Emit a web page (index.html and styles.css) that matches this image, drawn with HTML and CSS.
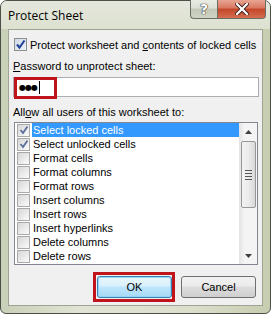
FILE: index.html
```html
<!DOCTYPE html>
<html>
<head>
<meta charset="utf-8">
<link rel="stylesheet" href="styles.css">
</head>
<body>
<div class="window">
  <div class="titlebar">
    <span class="title">Protect Sheet</span>
    <div class="caption-btns">
      <div class="cbtn help">?</div>
      <div class="cbtn close">
        <svg width="14" height="12" viewBox="0 0 14 12"><path d="M2 1 L12 11 M12 1 L2 11" stroke="#3a1a1a" stroke-width="4" stroke-linecap="square"/><path d="M2 1 L12 11 M12 1 L2 11" stroke="#fff" stroke-width="2.2" stroke-linecap="square"/></svg>
      </div>
    </div>
  </div>
  <div class="client">
    <div class="row top-row">
      <span class="chk big checked"><svg width="11" height="11" viewBox="0 0 11 11"><path d="M2 5.5 L4.5 8.5 L9.5 1.5" fill="none" stroke="#1c3f94" stroke-width="2"/></svg></span>
      <span>Protect worksheet and <u>c</u>ontents of locked cells</span>
    </div>
    <div class="lbl pw-lbl"><u>P</u>assword to unprotect sheet:</div>
    <div class="input">
      <span class="dots">●●●</span><span class="caret"></span>
      <div class="redbox pw-red"></div>
    </div>
    <div class="lbl allow-lbl">All<u>o</u>w all users of this worksheet to:</div>
    <div class="listbox">
      <div class="items">
        <div class="item sel"><span class="chk small checked"><svg width="10" height="10" viewBox="0 0 10 10"><path d="M1.5 5 L4 8 L8.5 1.5" fill="none" stroke="#5a6e9c" stroke-width="1.8"/></svg></span><span class="itxt">Select locked cells</span></div>
        <div class="item"><span class="chk small checked"><svg width="10" height="10" viewBox="0 0 10 10"><path d="M1.5 5 L4 8 L8.5 1.5" fill="none" stroke="#5a6e9c" stroke-width="1.8"/></svg></span><span class="itxt">Select unlocked cells</span></div>
        <div class="item"><span class="chk small"></span><span class="itxt">Format cells</span></div>
        <div class="item"><span class="chk small"></span><span class="itxt">Format columns</span></div>
        <div class="item"><span class="chk small"></span><span class="itxt">Format rows</span></div>
        <div class="item"><span class="chk small"></span><span class="itxt">Insert columns</span></div>
        <div class="item"><span class="chk small"></span><span class="itxt">Insert rows</span></div>
        <div class="item"><span class="chk small"></span><span class="itxt">Insert hyperlinks</span></div>
        <div class="item"><span class="chk small"></span><span class="itxt">Delete columns</span></div>
        <div class="item"><span class="chk small"></span><span class="itxt">Delete rows</span></div>
      </div>
      <div class="scrollbar">
        <div class="arrow"><svg width="7" height="4" viewBox="0 0 7 4"><path d="M0 4 L3.5 0 L7 4Z" fill="#404040"/></svg></div>
        <div class="track">
          <div class="thumb"><span class="grip"></span><span class="grip"></span><span class="grip"></span><span class="grip"></span></div>
        </div>
        <div class="arrow"><svg width="7" height="4" viewBox="0 0 7 4"><path d="M0 0 L7 0 L3.5 4Z" fill="#404040"/></svg></div>
      </div>
    </div>
    <div class="buttons">
      <div class="btn ok">OK<div class="redbox ok-red"></div></div>
      <div class="btn">Cancel</div>
    </div>
  </div>
</div>
</body>
</html>
```

FILE: styles.css
```css
html, body {
  margin: 0;
  padding: 0;
  background: #ffffff;
}

.window {
  box-sizing: border-box;
  width: 271px;
  height: 314px;
  border: 1px solid #4c4f48;
  border-radius: 7px 7px 6px 6px;
  background: linear-gradient(90deg, #c9d0b8 0%, #e1e4d4 30%, #dcdfcc 70%, #c7cdb0 100%);
  display: flex;
  flex-direction: column;
  font-family: "Liberation Sans", Arial, sans-serif;
  font-size: 11px;
  color: #000;
  white-space: nowrap;
}

.titlebar {
  height: 28px;
  display: flex;
  justify-content: space-between;
  align-items: flex-start;
  background: linear-gradient(180deg, #e4e7dc 0%, #dde1d0 100%);
  border-radius: 6px 6px 0 0;
}

.title {
  font-family: "Open Sans", "Noto Sans", sans-serif;
  font-size: 12px;
  padding: 6px 0 0 7px;
  color: #000;
}

.caption-btns {
  display: flex;
  margin-right: 4px;
  margin-top: -1px;
}

.cbtn {
  box-sizing: border-box;
  height: 19px;
  border: 1px solid #6b6d68;
  border-top: none;
  display: flex;
  align-items: center;
  justify-content: center;
}

.help {
  width: 27px;
  border-radius: 0 0 0 4px;
  border-right: none;
  background: linear-gradient(180deg, #eaece5 0%, #dcdfd3 45%, #c2c7b6 50%, #cfd3c3 100%);
  font-family: "DejaVu Sans", sans-serif;
  font-weight: bold;
  font-size: 14px;
  color: #fff;
  text-shadow: 0 0 1px #333, 0 0 1px #333, 0 0 1px #333;
}

.close {
  width: 49px;
  border-radius: 0 0 4px 0;
  background: linear-gradient(180deg, #e8a493 0%, #d9775e 45%, #c44628 50%, #d46d50 100%);
}

.client {
  flex: 1;
  margin: 0 7px 7px 7px;
  background: #f0f0f0;
  border: 1px solid #9ea494;
  display: flex;
  flex-direction: column;
  padding: 8px 5px 0 4px;
}

.row {
  display: flex;
  align-items: center;
}

.top-row {
  height: 13px;
  gap: 3px;
}

.chk {
  box-sizing: border-box;
  display: flex;
  align-items: center;
  justify-content: center;
  border: 1px solid #8e8f8f;
  background: linear-gradient(135deg, #dcdcdc 0%, #f5f5f5 80%, #ffffff 100%);
  flex: none;
}

.chk.big {
  width: 13px;
  height: 13px;
  margin-left: 1px;
}

.chk.big.checked {
  background: linear-gradient(135deg, #cfd8e6 0%, #eef2f8 100%);
}

.chk.small {
  width: 13px;
  height: 13px;
  border-color: #a9a9a9;
  background: linear-gradient(135deg, #d6d6d6 0%, #f0f0f0 70%, #fafafa 100%);
}

.lbl {
  height: 13px;
  line-height: 13px;
}

.pw-lbl {
  margin-top: 9px;
}

.input {
  position: relative;
  box-sizing: border-box;
  margin-top: 4px;
  width: 246px;
  height: 20px;
  border: 1px solid #abadb3;
  background: #fff;
  display: flex;
  align-items: center;
  padding-left: 5px;
}

.dots {
  font-family: "DejaVu Sans", sans-serif;
  font-size: 8px;
  letter-spacing: -1px;
}

.caret {
  display: inline-block;
  width: 1px;
  height: 13px;
  background: #000;
  margin-left: 2px;
}

.redbox {
  position: absolute;
  box-sizing: border-box;
  border: 3px solid #c0141c;
}

.pw-red {
  left: 0;
  top: -1px;
  width: 43px;
  height: 22px;
}

.allow-lbl {
  margin-top: 9px;
}

.listbox {
  box-sizing: border-box;
  margin-top: 3px;
  margin-left: 1px;
  width: 244px;
  height: 143px;
  border: 1px solid #828790;
  background: #fff;
  display: flex;
}

.items {
  flex: 1;
  display: flex;
  flex-direction: column;
}

.item {
  height: 14px;
  display: flex;
  align-items: center;
  padding-left: 2px;
}

.item .chk {
  margin-right: 2px;
}

.itxt {
  height: 14px;
  line-height: 14px;
  padding: 0 1px;
}

.item.sel .itxt {
  flex: 1;
  background: #3399ff;
  color: #fff;
}

.scrollbar {
  width: 18px;
  display: flex;
  flex-direction: column;
  background: linear-gradient(90deg, #e3e3e3 0%, #f4f4f4 30%, #f4f4f4 100%);
}

.arrow {
  height: 17px;
  display: flex;
  align-items: center;
  justify-content: center;
}

.track {
  flex: 1;
  display: flex;
  flex-direction: column;
  padding: 1px 1px 0 2px;
}

.thumb {
  box-sizing: border-box;
  height: 67px;
  border: 1px solid #979797;
  border-radius: 2px;
  background: linear-gradient(90deg, #f2f2f2 0%, #ebebeb 50%, #d8d8d8 100%);
  display: flex;
  flex-direction: column;
  align-items: center;
  justify-content: center;
  gap: 1px;
}

.grip {
  width: 7px;
  height: 1px;
  border-bottom: 1px solid #555;
}

.buttons {
  display: flex;
  justify-content: flex-end;
  gap: 9px;
  margin-top: 11px;
  padding-right: 1px;
}

.btn {
  position: relative;
  box-sizing: border-box;
  width: 75px;
  height: 22px;
  border: 1px solid #707070;
  border-radius: 3px;
  background: linear-gradient(180deg, #f2f2f2 0%, #ebebeb 45%, #dddddd 50%, #cfcfcf 100%);
  display: flex;
  align-items: center;
  justify-content: center;
}

.btn.ok {
  border-color: #3c7fb1;
  background: linear-gradient(180deg, #e9f6fd 0%, #d9f0fc 45%, #bee6fd 50%, #a7d9f5 100%);
  box-shadow: inset 0 0 0 1px #8fd6f9;
}

.ok-red {
  left: -5px;
  top: -5px;
  width: 82px;
  height: 30px;
}
```
